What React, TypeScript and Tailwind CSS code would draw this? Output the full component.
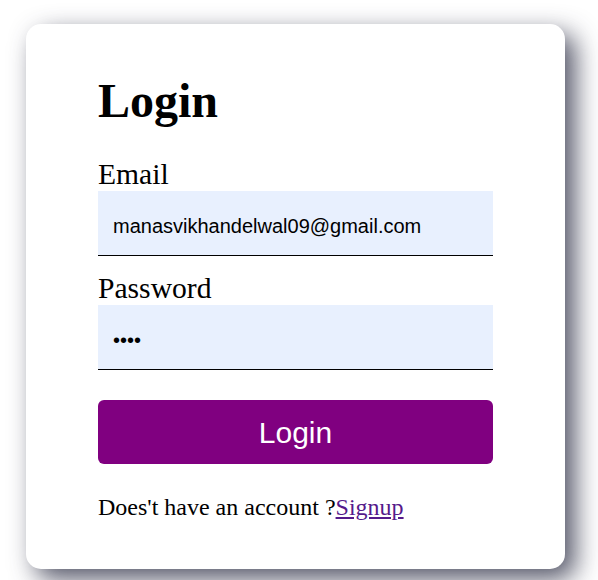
import React from "react";

const serif = "font-['Liberation_Serif','Times_New_Roman',serif]";
const sans = "font-['Liberation_Sans',Arial,sans-serif]";

const Field: React.FC<{ label: string; type: string; value: string }> = ({
  label,
  type,
  value,
}) => {
  return (
    <div className="flex flex-col">
      <label className={`${serif} text-[29.6px] leading-[34px] text-black`}>
        {label}
      </label>
      <input
        type={type}
        defaultValue={value}
        readOnly
        className={`${sans} h-[65px] w-full border-b border-black bg-[#e8f0fe] px-[15px] pt-[6px] text-[20px] text-black outline-none`}
      />
    </div>
  );
};

const App: React.FC = () => {
  return (
    <div className="min-h-[580px] w-full bg-white pl-[26px] pt-[24px]">
      <div className="flex w-[539px] flex-col rounded-[15px] bg-white px-[72px] pb-[48px] pt-[49px] shadow-[10px_10px_26px_rgba(40,42,65,0.8)]">
        <h1 className={`${serif} text-[48px] font-bold leading-[55px] text-black`}>
          Login
        </h1>

        <div className="mt-[29px] flex flex-col gap-[15px]">
          <Field label="Email" type="email" value="manasvikhandelwal09@gmail.com" />
          <Field label="Password" type="password" value="1234" />
        </div>

        <button
          className={`${sans} mt-[30px] h-[64px] w-full rounded-[6px] bg-[#800080] text-[30px] text-white`}
        >
          Login
        </button>

        <p className={`${serif} mt-[29px] text-[24px] leading-[28px] text-black`}>
          Does't have an account ?
          <a href="#" className="text-[#551a8b] underline">
            Signup
          </a>
        </p>
      </div>
    </div>
  );
};

export default App;
